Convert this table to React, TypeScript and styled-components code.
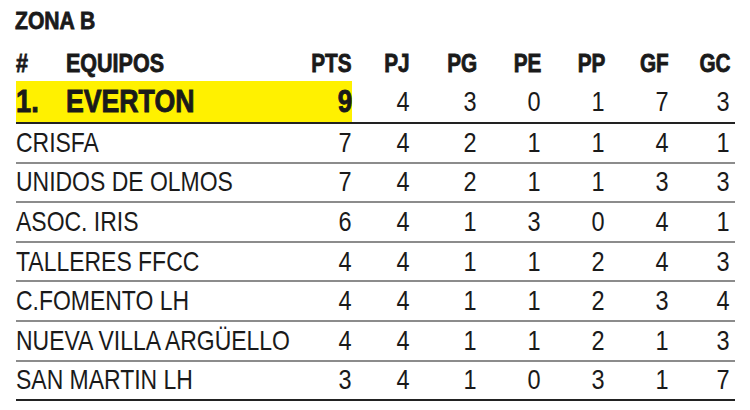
import React from "react";
import styled, { createGlobalStyle } from "styled-components";

const GlobalStyle = createGlobalStyle`
  body {
    margin: 0;
    background: #ffffff;
    font-family: "Liberation Sans", Arial, sans-serif;
    color: #1a1a1a;
  }
`;

const COLS = "50px 236px 50px 58px 67px 64px 64px 64px 61px";

const StyledTable = styled.div`
  width: 735px;
  padding: 7px 0 0 16px;
  box-sizing: border-box;
`;

// the paper uses a narrow grotesque, so squeeze the glyphs a bit
const Narrow = styled.span<{ squeeze: number; right?: boolean }>`
  display: inline-block;
  transform: scaleX(${(p) => p.squeeze});
  transform-origin: ${(p) => (p.right ? "right" : "left")} center;
`;

const Title = styled.div`
  font-weight: bold;
  font-size: 24px;
  line-height: 28px;
  height: 34px;
  margin-left: -1px;
  -webkit-text-stroke: 0.8px #1a1a1a;
`;

const Row = styled.div<{ head?: boolean; line?: "dark" | "grey" | "none" }>`
  display: grid;
  grid-template-columns: ${COLS};
  padding-right: 5px;
  height: ${(p) => (p.head ? "40px" : "37.6px")};
  border-bottom: ${(p) =>
    p.line === "dark" ? "2px solid #222" : p.line === "grey" ? "2px solid #8c8c8c" : "none"};
`;

const Cell = styled.div<{ right?: boolean; span?: number; mark?: boolean; bold?: boolean; big?: boolean }>`
  display: flex;
  align-items: center;
  justify-content: ${(p) => (p.right ? "flex-end" : "flex-start")};
  grid-column: ${(p) => (p.span ? `span ${p.span}` : "auto")};
  background: ${(p) => (p.mark ? "#fff100" : "transparent")};
  font-weight: ${(p) => (p.bold ? "bold" : "normal")};
  font-size: ${(p) => (p.big ? "31px" : p.bold ? "25px" : "28px")};
  -webkit-text-stroke: ${(p) => (p.big ? "0.9px #1a1a1a" : p.bold ? "0.8px #1a1a1a" : "0")};
  white-space: nowrap;
`;

const HeadCell = styled(Cell)`
  align-items: flex-end;
  padding-bottom: 3px;
`;

type Team = { name: string; stats: number[] };

const head = ["PTS", "PJ", "PG", "PE", "PP", "GF", "GC"];

const leader: Team = { name: "EVERTON", stats: [9, 4, 3, 0, 1, 7, 3] };

const teams: Team[] = [
  { name: "CRISFA", stats: [7, 4, 2, 1, 1, 4, 1] },
  { name: "UNIDOS DE OLMOS", stats: [7, 4, 2, 1, 1, 3, 3] },
  { name: "ASOC. IRIS", stats: [6, 4, 1, 3, 0, 4, 1] },
  { name: "TALLERES FFCC", stats: [4, 4, 1, 1, 2, 4, 3] },
  { name: "C.FOMENTO LH", stats: [4, 4, 1, 1, 2, 3, 4] },
  { name: "NUEVA VILLA ARGÜELLO", stats: [4, 4, 1, 1, 2, 1, 3] },
  { name: "SAN MARTIN LH", stats: [3, 4, 1, 0, 3, 1, 7] },
];

const App = () => {
  return (
    <>
      <GlobalStyle />
      <StyledTable>
        <Title>
          <Narrow squeeze={0.88}>ZONA B</Narrow>
        </Title>
        <Row head line="none">
          <HeadCell bold>
            <Narrow squeeze={0.86}>#</Narrow>
          </HeadCell>
          <HeadCell bold>
            <Narrow squeeze={0.86}>EQUIPOS</Narrow>
          </HeadCell>
          {head.map((h) => (
            <HeadCell bold right key={h}>
              <Narrow squeeze={0.83} right>
                {h}
              </Narrow>
            </HeadCell>
          ))}
        </Row>
        <Row line="dark" style={{ height: "41px" }}>
          <Cell mark bold big>
            <Narrow squeeze={0.88}>1.</Narrow>
          </Cell>
          <Cell mark bold big>
            <Narrow squeeze={0.86}>{leader.name}</Narrow>
          </Cell>
          {leader.stats.map((s, i) => (
            <Cell right key={i} mark={i === 0} bold={i === 0} big={i === 0}>
              <Narrow squeeze={0.84} right>
                {s}
              </Narrow>
            </Cell>
          ))}
        </Row>
        {teams.map((t, idx) => (
          <Row key={t.name} line={idx === teams.length - 1 ? "dark" : "grey"}>
            <Cell span={2}>
              <Narrow squeeze={0.82}>{t.name}</Narrow>
            </Cell>
            {t.stats.map((s, i) => (
              <Cell right key={i}>
                <Narrow squeeze={0.84} right>
                  {s}
                </Narrow>
              </Cell>
            ))}
          </Row>
        ))}
      </StyledTable>
    </>
  );
};

export default App;
